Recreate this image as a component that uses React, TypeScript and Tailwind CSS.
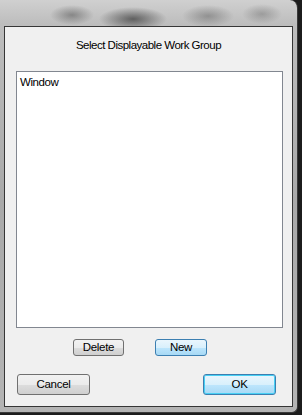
const ui = "font-['Liberation_Sans',Arial,sans-serif]";

function Button({
  label,
  width,
  height,
  variant = "normal",
}: {
  label: string;
  width: string;
  height: string;
  variant?: "normal" | "hot" | "focus";
}) {
  const skin =
    variant === "normal"
      ? "border-[#707070] bg-[linear-gradient(to_bottom,#f2f2f2_0%,#ebebeb_50%,#dddddd_50%,#cfcfcf_100%)]"
      : variant === "hot"
        ? "border-[#3c7fb1] bg-[linear-gradient(to_bottom,#eaf6fd_0%,#d9f0fc_50%,#bee6fd_50%,#a7d9f5_100%)]"
        : "border-[#3c7fb1] bg-[linear-gradient(to_bottom,#eaf6fd_0%,#d9f0fc_50%,#bee6fd_50%,#a7d9f5_100%)] shadow-[inset_0_0_0_1px_#48d0f4]";
  return (
    <button
      className={`${width} ${height} flex items-center justify-center rounded-[3px] border text-[11.5px] leading-none tracking-[-0.3px] text-black ${skin}`}
    >
      {label}
    </button>
  );
}

export default function App() {
  return (
    <div className={`h-[415px] w-[302px] overflow-hidden bg-[#1c1c1c] ${ui}`}>
      <div className="h-[413px] w-[298px] rounded-tr-[8px] rounded-br-[6px] border-r border-b border-[#3a3a3a] bg-[radial-gradient(ellipse_22px_10px_at_72px_15px,rgba(60,60,60,0.45),transparent),radial-gradient(ellipse_34px_12px_at_133px_19px,rgba(30,30,30,0.6),transparent),radial-gradient(ellipse_26px_11px_at_208px_16px,rgba(70,70,70,0.4),transparent),radial-gradient(ellipse_20px_10px_at_262px_14px,rgba(80,80,80,0.35),transparent),linear-gradient(to_bottom,#d0d0d0,#bdbdbd_24px,#a9a9a9_200px,#b4b4b4)] pt-[26px] pr-[4px] pb-[6px] pl-[4px]">
        <div className="flex h-[381px] w-[289px] flex-col border border-[#363636] bg-[#f0f0f0]">
          <p className="mt-[10px] text-center text-[11.5px] leading-[16px] tracking-[-0.5px] text-black">
            Select Displayable Work Group
          </p>

          <div className="mt-[18px] ml-[11px] h-[257px] w-[267px] border border-[#828790] bg-white pt-[2px] pl-[3px] text-[11.5px] leading-[16px] tracking-[-0.4px] text-black">
            Window
          </div>

          <div className="mt-[11px] ml-[68px] flex gap-[31px]">
            <Button label="Delete" width="w-[51px]" height="h-[17px]" />
            <Button label="New" width="w-[52px]" height="h-[17px]" variant="hot" />
          </div>

          <div className="mt-[18px] ml-[12px] mr-[16px] flex justify-between">
            <Button label="Cancel" width="w-[73px]" height="h-[21px]" />
            <Button label="OK" width="w-[73px]" height="h-[21px]" variant="focus" />
          </div>
        </div>
      </div>
    </div>
  );
}
